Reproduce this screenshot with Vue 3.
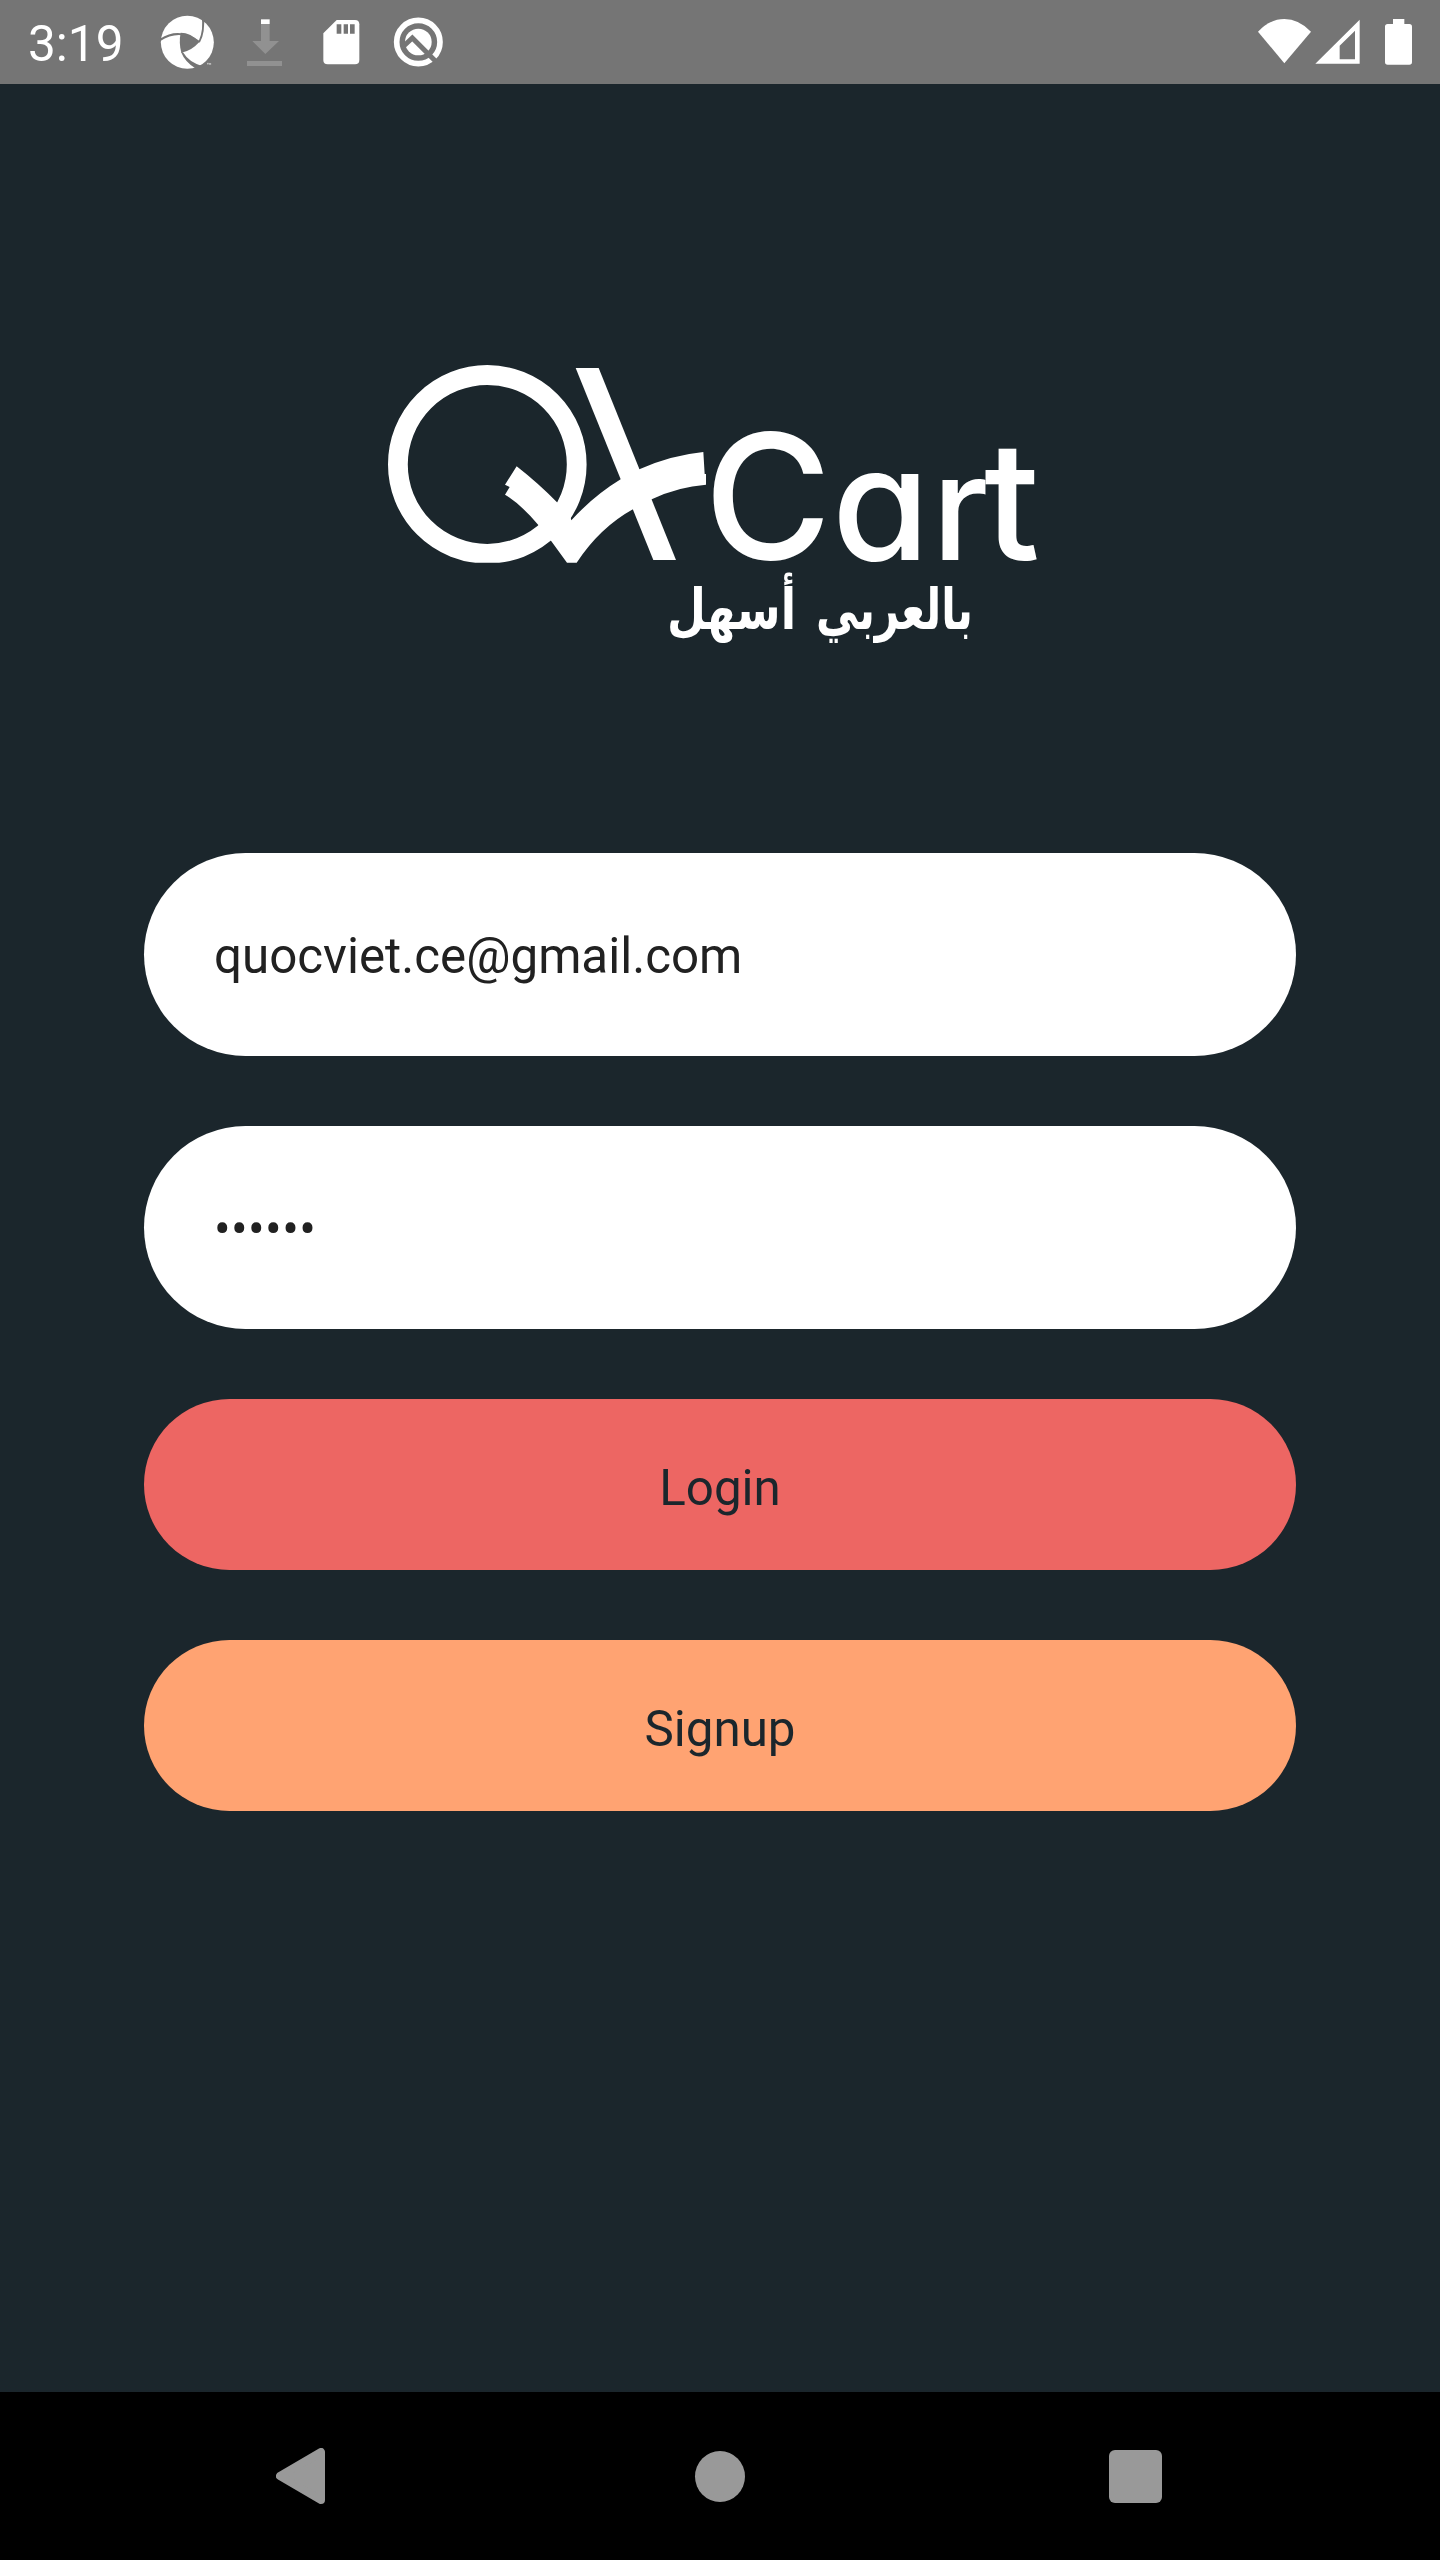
<script setup>
import { ref } from 'vue'

const email = ref('quocviet.ce@gmail.com')
const password = ref('123456')
</script>

<template>
  <div class="screen">
    <header class="status">
      <span class="time">3:19</span>
      <svg class="swirl" viewBox="480 0 168 252" width="56" height="84">
        <circle cx="562" cy="127" r="79.5" fill="#fff" />
        <g fill="#757575">
          <path d="M542 98 Q572 98 598 126 Q574 153 544 158 Q536 127 542 98Z" />
          <path d="M480 116 Q538 78 600 124 L598 128 Q540 84 480 124Z" />
          <path d="M604 44 Q612 88 596 124 L600 127 Q616 98 612 44Z" />
          <path d="M543 156 Q556 188 588 206 L606 198 Q566 186 549 157Z" />
        </g>
        <path d="M621 190h5M623.500 190v4M628 194v-4l2 3 2-3v4" stroke="#fff" stroke-width="1.500" fill="none" />
      </svg>
      <svg class="download" viewBox="78 0 111 252" width="37" height="84">
        <path fill="#919191" d="M123 72h26v51h28l-41 39-39-39h26zM81 183h105v15H81z" />
        <path fill="#fff" d="M123 58h26v14h-26z" />
      </svg>
      <svg class="sd" viewBox="306 0 117 252" width="39" height="84">
        <path fill="#fff" d="M350 60h55q13 0 13 13v107q0 13-13 13h-82q-13 0-13-13v-80z" />
        <path fill="#757575" d="M350 73h14v28h-14zM371 73h13v28h-13zM390 73h14v28h-14z" />
      </svg>
      <svg class="qmark" viewBox="516 0 156 252" width="52" height="84">
        <circle cx="595" cy="126" r="65" fill="none" stroke="#fff" stroke-width="17" />
        <circle cx="595" cy="126" r="40" fill="#fff" />
        <path d="M548 141 L577 114 L646 183" fill="none" stroke="#757575" stroke-width="15" />
      </svg>
      <svg class="wifi" viewBox="111 0 165 252" width="55" height="84">
        <path fill="#fff" d="M193 190 114 95Q150 57 193 57T273 95z" />
      </svg>
      <svg class="signal" viewBox="285 0 135 252" width="45" height="84">
        <path fill="#fff" fill-rule="evenodd" d="M286 191H419V59zM359 137 405 92V178H359z" />
      </svg>
      <svg class="battery" viewBox="492 0 87 252" width="29" height="84">
        <path fill="#fff" d="M519 57h34v15h15q8 0 8 8v106q0 8-8 8h-65q-8 0-8-8V80q0-8 8-8h16z" />
      </svg>
    </header>

    <main class="content">
      <svg class="logo" viewBox="380 360 664 290" width="664" height="290">
        <defs>
          <clipPath id="ring-clip"><rect x="380" y="360" width="220" height="202.700" /></clipPath>
        </defs>
        <circle cx="487.300" cy="464.400" r="89.400" fill="none" stroke="#fff" stroke-width="19.800" clip-path="url(#ring-clip)" />
        <g fill="#fff" transform="translate(370 340) scale(0.33333)">
          <path d="M617 84H686L918 660H850Z" />
          <path d="M440 379Q505 430 561 487L602 533 604 541Q670 468 752 418 780 401 808 388 900 346 1000 336L1004 402H1008V434Q925 440 847 477L790 507Q690 562 620 668H591L543 602Q525 577 505 555 455 495 405 464L419 441 405 434Z" />
        </g>
        <text class="cart" y="560"><tspan class="cap" x="704" dy="-1">C</tspan><tspan class="a" x="832" dy="1">a</tspan><tspan class="r" x="932">r</tspan><tspan class="t" x="984">t</tspan></text>
        <g class="tagline">
          <text x="973" y="629" direction="rtl" textLength="157" lengthAdjust="spacingAndGlyphs">بالعربي</text>
          <text x="796" y="629" direction="rtl" textLength="129" lengthAdjust="spacingAndGlyphs">أسهل</text>
        </g>
      </svg>

      <form class="form" @submit.prevent>
        <input v-model="email" class="field" type="text" />
        <input v-model="password" class="field password" type="password" />
        <button class="btn login" type="submit">Login</button>
        <button class="btn signup" type="button">Signup</button>
      </form>
    </main>

    <nav class="nav">
      <svg class="back" viewBox="0 0 49 56" width="49" height="56">
        <path d="M4 28 45 4V52z" fill="#999" stroke="#999" stroke-width="8" stroke-linejoin="round" />
      </svg>
      <span class="home"></span>
      <span class="recent"></span>
    </nav>
  </div>
</template>

<style>
body {
  margin: 0;
}
</style>

<style scoped>
.screen {
  display: flex;
  flex-direction: column;
  width: 1440px;
  height: 2560px;
  overflow: hidden;
  background: #1b262c;
  font-family: Roboto, sans-serif;
}
svg {
  display: block;
  flex: none;
}
.status {
  display: flex;
  height: 84px;
  padding: 0 27px 0 28px;
  background: #757575;
  color: #fff;
}
.time {
  width: 132px;
  font-size: 49.5px;
  line-height: 88px;
}
.download {
  margin-left: 30px;
}
.sd {
  margin-left: 39px;
}
.qmark {
  margin-left: 31px;
}
.wifi {
  margin-left: auto;
}
.signal {
  margin-left: 3px;
}
.battery {
  margin-left: 24px;
}
.content {
  flex: 1;
  display: flex;
  flex-direction: column;
  padding: 276px 144px 0;
}
.logo {
  margin-left: 236px;
  overflow: visible;
}
.cart {
  fill: #fff;
  font-family: Inter, sans-serif;
  font-feature-settings: "cv11" 1;
}
.cap {
  font-size: 174px;
  font-weight: 450;
}
.a {
  font-size: 158px;
  font-weight: 500;
}
.r {
  font-size: 146px;
  font-weight: 500;
}
.t {
  font-size: 164px;
  font-weight: 500;
}
.tagline {
  fill: #fff;
  font-family: "DejaVu Sans", sans-serif;
  font-size: 57px;
  font-weight: 700;
}
.form {
  display: flex;
  flex-direction: column;
  gap: 70px;
  margin-top: 203px;
}
.field,
.btn {
  box-sizing: border-box;
  width: 100%;
  border: 0;
  outline: 0;
  font-family: Roboto, sans-serif;
  font-size: 49.3px;
}
.field {
  height: 203px;
  padding: 3px 70px 0;
  border-radius: 102px;
  background: #fff;
  color: #212121;
}
.password {
  letter-spacing: 0.4px;
}
.btn {
  height: 171px;
  padding: 6px 0 0;
  border-radius: 86px;
  color: #1b262c;
}
.login {
  background: #ed6663;
}
.signup {
  background: #ffa372;
}
.nav {
  display: flex;
  align-items: center;
  justify-content: space-between;
  height: 168px;
  padding: 0 278px 0 276px;
  background: #000;
}
.home {
  width: 50px;
  height: 51px;
  margin-left: 5px;
  border-radius: 50%;
  background: #999;
}
.recent {
  width: 53px;
  height: 53px;
  border-radius: 6px;
  background: #999;
}
</style>
